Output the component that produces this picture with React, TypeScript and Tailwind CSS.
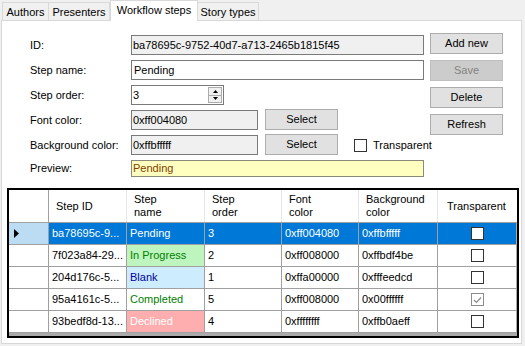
import React from "react";

type Row = {
  id: string;
  name: string;
  order: string;
  font: string;
  bg: string;
  nameCls: string;
  transparent: boolean;
  selected: boolean;
};

const rows: Row[] = [
  { id: "ba78695c-9...", name: "Pending", order: "3", font: "0xff004080", bg: "0xffbfffff", nameCls: "bg-white", transparent: false, selected: true },
  { id: "7f023a84-29...", name: "In Progress", order: "2", font: "0xff008000", bg: "0xffbdf4be", nameCls: "bg-[#bef4bd] text-[#008000]", transparent: false, selected: false },
  { id: "204d176c-5...", name: "Blank", order: "1", font: "0xffa00000", bg: "0xfffeedcd", nameCls: "bg-[#cdedfe] text-[#0000a0]", transparent: false, selected: false },
  { id: "95a4161c-5...", name: "Completed", order: "5", font: "0xff008000", bg: "0x00ffffff", nameCls: "bg-white text-[#008000]", transparent: true, selected: false },
  { id: "93bedf8d-13...", name: "Declined", order: "4", font: "0xffffffff", bg: "0xffb0aeff", nameCls: "bg-[#ffaeb0] text-white", transparent: false, selected: false },
];

function Button({ label, disabled }: { label: string; disabled?: boolean }) {
  return (
    <div
      className={
        disabled
          ? "flex h-[21px] w-[73px] shrink-0 items-center justify-center border border-[#bfbfbf] bg-[#cccccc] text-[#838383]"
          : "flex h-[21px] w-[73px] shrink-0 items-center justify-center border border-[#adadad] bg-[#e1e1e1]"
      }
    >
      {label}
    </div>
  );
}

function Check({ checked }: { checked?: boolean }) {
  return (
    <div
      className={
        checked
          ? "flex h-[13px] w-[13px] shrink-0 items-center justify-center border border-[#8c8c8c] bg-white"
          : "h-[13px] w-[13px] shrink-0 border border-[#333333] bg-white"
      }
    >
      {checked ? (
        <svg width="9" height="8" viewBox="0 0 9 8">
          <path d="M1 4 L3.5 6.5 L8 1.5" fill="none" stroke="#8a8a8a" strokeWidth="1.2" />
        </svg>
      ) : null}
    </div>
  );
}

function FormRow({ label, children }: { label: string; children: React.ReactNode }) {
  return (
    <div className="flex h-[20px] items-center">
      <div className="w-[101px] shrink-0 whitespace-nowrap">{label}</div>
      {children}
    </div>
  );
}

export default function App() {
  return (
    <div className="h-[346px] w-[525px] overflow-hidden bg-[#f0f0f0] font-['Liberation_Sans',Arial,sans-serif] text-[11px] text-black">
      {/* tab strip */}
      <div className="flex h-[20px] items-end pl-[2px]">
        <div className="flex h-[18px] w-[47px] items-center justify-center border border-b-0 border-[#d9d9d9] bg-[#f0f0f0] pt-[1px]">Authors</div>
        <div className="flex h-[18px] w-[61px] items-center justify-center border border-b-0 border-l-0 border-[#d9d9d9] bg-[#f0f0f0] pt-[1px]">Presenters</div>
        <div className="relative z-10 -mb-px flex h-[21px] w-[88px] items-center justify-center border border-b-0 border-[#d9d9d9] bg-white pb-[2px]">Workflow steps</div>
        <div className="flex h-[18px] w-[61px] items-center justify-center border border-b-0 border-l-0 border-[#d9d9d9] bg-[#f0f0f0] pt-[1px]">Story types</div>
      </div>

      {/* tab page */}
      <div className="ml-px flex h-[324px] w-[521px] flex-col border border-[#d9d9d9] bg-white">
        <div className="mt-[12px] flex">
          <div className="ml-[28px] mt-[2px] flex w-[394px] shrink-0 flex-col gap-[5px]">
            <FormRow label="ID:">
              <div className="flex h-[20px] flex-1 items-center border border-[#7a7a7a] bg-[#f0f0f0] pl-[1px]">ba78695c-9752-40d7-a713-2465b1815f45</div>
            </FormRow>
            <FormRow label="Step name:">
              <div className="flex h-[20px] flex-1 items-center border border-[#7a7a7a] bg-white pl-[2px]">Pending</div>
            </FormRow>
            <FormRow label="Step order:">
              <div className="flex h-[20px] w-[93px] items-center border border-[#7a7a7a] bg-white">
                <div className="flex-1 pl-[1px]">3</div>
                <div className="mr-px flex h-[16px] w-[14px] flex-col border border-[#acacac] bg-[#f0f0f0]">
                  <div className="flex flex-1 items-center justify-center border-b border-[#acacac]">
                    <svg width="5" height="3" viewBox="0 0 5 3"><path d="M0 3 L2.5 0 L5 3 Z" fill="#000" /></svg>
                  </div>
                  <div className="flex flex-1 items-center justify-center">
                    <svg width="5" height="3" viewBox="0 0 5 3"><path d="M0 0 L2.5 3 L5 0 Z" fill="#000" /></svg>
                  </div>
                </div>
              </div>
            </FormRow>
            <FormRow label="Font color:">
              <div className="flex h-[20px] w-[127px] shrink-0 items-center border border-[#7a7a7a] bg-[#f0f0f0] pl-[1px]">0xff004080</div>
              <div className="-mt-[1px] ml-[7px]">
                <Button label="Select" />
              </div>
            </FormRow>
            <FormRow label="Background color:">
              <div className="flex h-[20px] w-[127px] shrink-0 items-center border border-[#7a7a7a] bg-[#f0f0f0] pl-[1px]">0xffbfffff</div>
              <div className="-mt-[1px] ml-[7px]">
                <Button label="Select" />
              </div>
              <div className="ml-[16px] flex shrink-0 items-center gap-[6px] whitespace-nowrap">
                <Check />
                <span>Transparent</span>
              </div>
            </FormRow>
            <div className="flex h-[17px] items-center">
              <div className="w-[101px] shrink-0">Preview:</div>
              <div className="flex h-[17px] flex-1 items-center border border-[#8a8a78] bg-[#ffffbf] pl-[1px] text-[#804000]">Pending</div>
            </div>
          </div>
          <div className="ml-[6px] flex flex-col gap-[6px]">
            <Button label="Add new" />
            <Button label="Save" disabled />
            <Button label="Delete" />
            <Button label="Refresh" />
          </div>
        </div>

        {/* data grid */}
        <div className="ml-[5px] mt-[11px] flex h-[150px] w-[512px] flex-col border-2 border-black bg-[#ababab]">
          <div className="flex h-[33px] border-b border-[#a0a0a0] bg-white leading-[13px]">
            <div className="w-[40px] border-r border-[#a0a0a0]" />
            <div className="flex w-[78px] items-center border-r border-[#e5e5e5] pl-[7px]">Step ID</div>
            <div className="flex w-[78px] items-center border-r border-[#e5e5e5] pl-[7px]">Step<br />name</div>
            <div className="flex w-[77px] items-center border-r border-[#e5e5e5] pl-[7px]">Step<br />order</div>
            <div className="flex w-[77px] items-center border-r border-[#e5e5e5] pl-[7px]">Font<br />color</div>
            <div className="flex w-[79px] items-center border-r border-[#e5e5e5] pl-[7px]">Background<br />color</div>
            <div className="flex w-[79px] items-center pl-[9px]">Transparent</div>
          </div>
          {rows.map((r) => {
            const cell = r.selected ? "bg-[#0078d7] text-white" : "bg-white";
            return (
              <div key={r.id} className="flex h-[22px] border-b border-[#a0a0a0]">
                <div className={(r.selected ? "bg-[#bcdcf4] " : "bg-white ") + "flex w-[40px] items-center border-r border-[#a0a0a0] pl-[5px]"}>
                  {r.selected ? (
                    <svg width="5" height="9" viewBox="0 0 5 9"><path d="M0 0 L5 4.5 L0 9 Z" fill="#000" /></svg>
                  ) : null}
                </div>
                <div className={cell + " flex w-[78px] items-center border-r border-[#a0a0a0] pl-[3px]"}>{r.id}</div>
                <div className={(r.selected ? "bg-[#0078d7] text-white" : r.nameCls) + " flex w-[78px] items-center border-r border-[#a0a0a0] pl-[3px]"}>{r.name}</div>
                <div className={cell + " flex w-[77px] items-center border-r border-[#a0a0a0] pl-[3px]"}>{r.order}</div>
                <div className={cell + " flex w-[77px] items-center border-r border-[#a0a0a0] pl-[3px]"}>{r.font}</div>
                <div className={cell + " flex w-[79px] items-center border-r border-[#a0a0a0] pl-[3px]"}>{r.bg}</div>
                <div className={cell + " flex w-[78px] items-center justify-center"}>
                  <Check checked={r.transparent} />
                </div>
              </div>
            );
          })}
        </div>
      </div>
    </div>
  );
}
